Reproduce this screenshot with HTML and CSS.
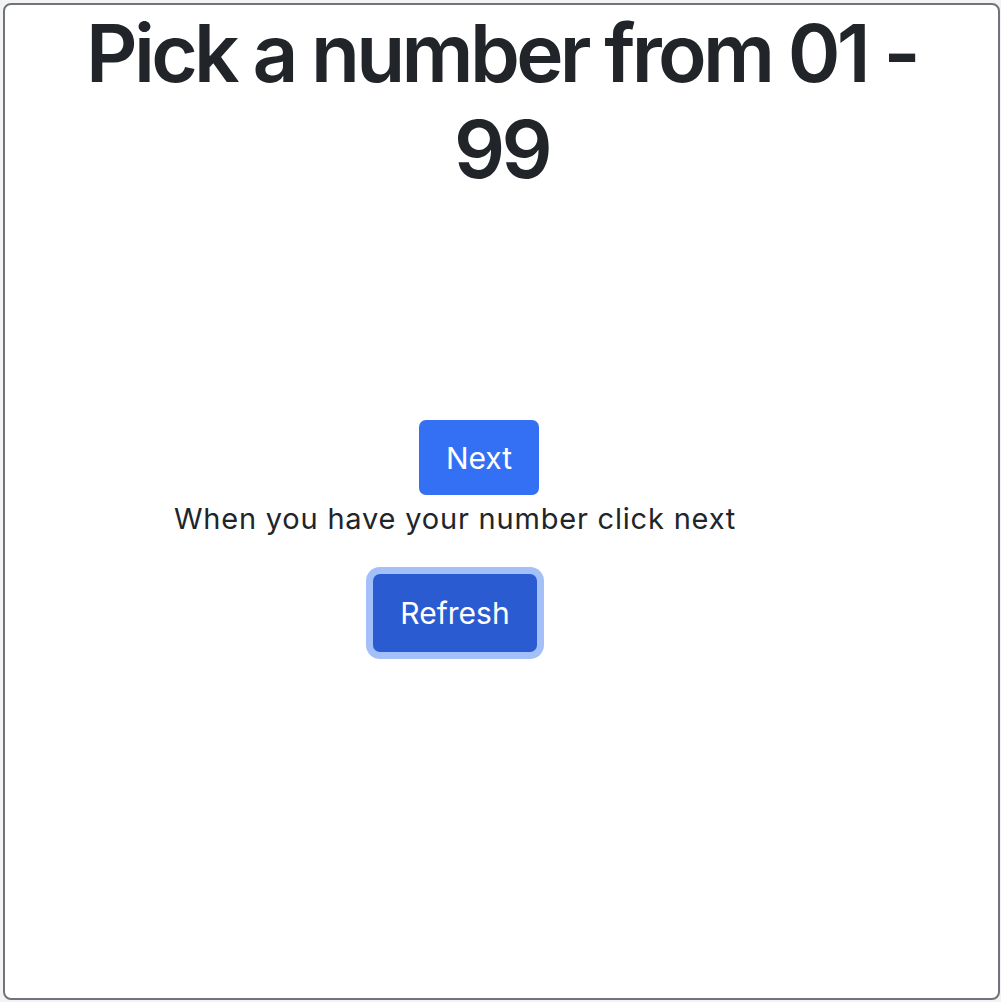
FILE: index.html
```html
<!DOCTYPE html>
<html lang="en">
<head>
<meta charset="utf-8">
<title>Pick a number</title>
<link rel="stylesheet" href="styles.css">
</head>
<body>
<main class="card">
  <h1 class="title">Pick a number from 01 - 99</h1>
  <section class="stage">
    <button class="btn btn-next" type="button">Next</button>
    <p class="hint">When you have your number click next</p>
    <button class="btn btn-refresh" type="button">Refresh</button>
  </section>
</main>
</body>
</html>
```
FILE: styles.css
```css
html {
  background: #f3f3f3;
}
body {
  margin: 3px 1px 2px 3px;
  font-family: Inter, "Noto Sans", sans-serif;
  color: #212529;
}
.card {
  box-sizing: border-box;
  height: 997px;
  background: #fff;
  border: 2px solid #6e747a;
  border-radius: 8px;
  display: flex;
  flex-direction: column;
  align-items: center;
}
.title {
  margin: 0;
  width: 880px;
  text-align: center;
  font-size: 80px;
  font-weight: 600;
  line-height: 96px;
  letter-spacing: -3.7px;
}
.stage {
  margin-top: 223px;
  display: flex;
  flex-direction: column;
  align-items: center;
  padding-right: 93px;
}
.btn {
  font-family: Inter, "Noto Sans", sans-serif;
  font-size: 30px;
  color: #fff;
  border: 0;
  border-radius: 7px;
  height: 75px;
  padding: 0 27px;
  cursor: pointer;
}
.btn-next {
  background: #3470f4;
  margin-left: 48px;
}
.hint {
  margin: 3px 0 34px;
  font-size: 29px;
  line-height: 42px;
  letter-spacing: 0.8px;
}
.btn-refresh {
  background: #2a5bd1;
  height: 78px;
  box-shadow: 0 0 0 7px #a3c0f9;
}
```
